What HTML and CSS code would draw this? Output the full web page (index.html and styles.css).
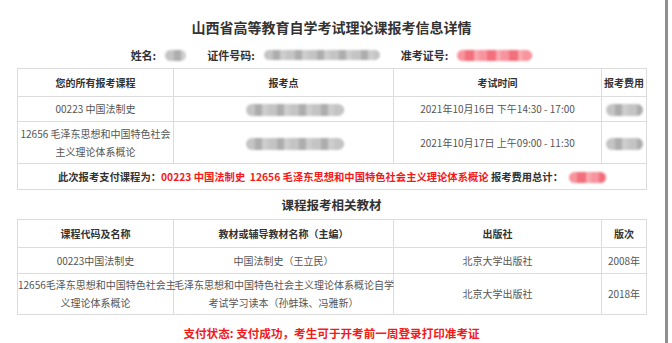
FILE: index.html
```html
<!DOCTYPE html>
<html lang="zh-CN">
<head>
<meta charset="utf-8">
<title>报考信息详情</title>
<link rel="stylesheet" href="styles.css">
</head>
<body>
<div class="page">
  <h1 class="title">山西省高等教育自学考试理论课报考信息详情</h1>
  <div class="info">
    <span class="label">姓名:</span><span class="blur gray w-name"></span>
    <span class="label gap">证件号码:</span><span class="blur gray w-id"></span>
    <span class="label gap">准考证号:</span><span class="blur red w-no"></span>
  </div>

  <table class="grid">
    <colgroup><col class="c1"><col class="c2"><col class="c3"><col class="c4"></colgroup>
    <tr class="r-head">
      <th>您的所有报考课程</th><th>报考点</th><th>考试时间</th><th>报考费用</th>
    </tr>
    <tr class="r-one">
      <td>00223 中国法制史</td>
      <td class="left-blur"><span class="blur gray w-site"></span></td>
      <td>2021年10月16日 下午14:30 - 17:00</td>
      <td><span class="blur gray w-fee"></span></td>
    </tr>
    <tr class="r-two">
      <td>12656 毛泽东思想和中国特色社会<br>主义理论体系概论</td>
      <td class="left-blur"><span class="blur gray w-site"></span></td>
      <td>2021年10月17日 上午09:00 - 11:30</td>
      <td><span class="blur gray w-fee"></span></td>
    </tr>
    <tr class="r-pay">
      <td colspan="4" class="pay">
        <span class="strong">此次报考支付课程为：</span><span class="hot">00223 中国法制史&nbsp;&nbsp;12656 毛泽东思想和中国特色社会主义理论体系概论</span>
        <span class="strong">报考费用总计：</span><span class="blur red w-total"></span>
      </td>
    </tr>
  </table>

  <h2 class="subtitle">课程报考相关教材</h2>

  <table class="grid">
    <colgroup><col class="c1"><col class="c2"><col class="c3"><col class="c4"></colgroup>
    <tr class="r-head">
      <th>课程代码及名称</th><th>教材或辅导教材名称（主编）</th><th>出版社</th><th>版次</th>
    </tr>
    <tr class="r-one2">
      <td>00223中国法制史</td>
      <td>中国法制史（王立民）</td>
      <td>北京大学出版社</td>
      <td>2008年</td>
    </tr>
    <tr class="r-two2">
      <td class="tight">12656毛泽东思想和中国特色社会主<br>义理论体系概论</td>
      <td class="tight">毛泽东思想和中国特色社会主义理论体系概论自学<br>考试学习读本（孙蚌珠、冯雅新）</td>
      <td>北京大学出版社</td>
      <td>2018年</td>
    </tr>
  </table>

  <p class="status">支付状态: 支付成功，考生可于开考前一周登录打印准考证</p>
</div>
</body>
</html>
```

FILE: styles.css
```css
html, body {
  margin: 0;
  padding: 0;
  background: #fff;
}

body {
  font-family: "Noto Sans CJK SC", "Noto Sans", sans-serif;
  color: #555;
}

.page {
  box-sizing: border-box;
  width: 668px;
  min-height: 343px;
  border-right: 3px solid #8e8e8e;
  padding: 17px 0 0 17px;
}

.title {
  margin: 0;
  width: 629px;
  text-align: center;
  font-size: 14px;
  line-height: 20px;
  font-weight: bold;
  color: #333;
}

.info {
  width: 629px;
  margin-top: 10px;
  height: 16px;
  display: flex;
  justify-content: center;
  align-items: center;
  font-size: 11px;
  line-height: 16px;
  font-weight: bold;
  color: #333;
}

.label.gap {
  margin-left: 21px;
}

.blur {
  display: inline-block;
  height: 11px;
  border-radius: 6px;
  filter: blur(1px);
  vertical-align: middle;
}

.info .blur {
  margin-left: 9px;
}

.blur.gray {
  background: repeating-linear-gradient(90deg, #c4c4c4 0 9px, #adadad 9px 16px, #cdcdcd 16px 22px);
}

.blur.red {
  background: repeating-linear-gradient(90deg, #f8949e 0 8px, #f26f7c 8px 17px, #f8a8af 17px 22px);
}

.w-name { width: 21px; }
.w-id { width: 116px; height: 10px; }
.w-no { width: 75px; }
.w-site { width: 98px; height: 12px; }
.w-fee { width: 37px; height: 12px; }
.w-total { width: 37px; height: 11px; margin-left: 6px; }

.grid {
  width: 629px;
  margin-top: 5px;
  border-collapse: collapse;
  table-layout: fixed;
  font-size: 10px;
  line-height: 18px;
}

.c1 { width: 156px; }
.c2 { width: 220px; }
.c3 { width: 208px; }
.c4 { width: 45px; }

.grid th,
.grid td {
  border: 1px solid #dcdcdc;
  text-align: center;
  padding: 0 2px;
  vertical-align: middle;
}

.grid th {
  font-weight: bold;
  color: #333;
  white-space: nowrap;
}

.grid td {
  color: #555;
}

.grid td.tight {
  padding: 0;
  white-space: nowrap;
}

.grid td.left-blur {
  text-align: left;
  padding-left: 72px;
}

.r-head { height: 28px; }
.r-one { height: 25px; }
.r-two { height: 42px; }
.r-pay { height: 26px; }
.r-one2 { height: 26px; }
.r-two2 { height: 41px; }

.pay {
  font-weight: bold;
  white-space: nowrap;
  font-size: 10.3px;
}

.strong {
  color: #333;
}

.hot {
  color: #f41a1a;
}

.subtitle {
  margin: 0;
  width: 629px;
  text-align: center;
  font-size: 12.5px;
  line-height: 29px;
  font-weight: bold;
  color: #333;
}

.subtitle + .grid {
  margin-top: 0;
}

.status {
  margin: 8px 0 0;
  width: 629px;
  text-align: center;
  font-size: 11.6px;
  line-height: 20px;
  font-weight: bold;
  color: #f41a1a;
}
```
